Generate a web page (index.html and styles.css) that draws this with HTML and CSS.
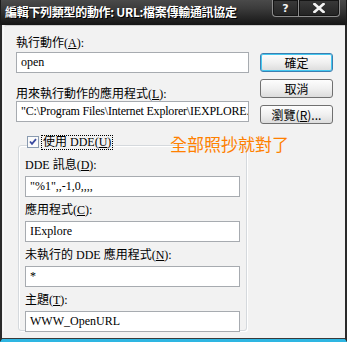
FILE: index.html
```html
<!DOCTYPE html>
<html>
<head>
<meta charset="utf-8">
<link rel="stylesheet" href="styles.css">
</head>
<body>
<div class="window">
  <div class="titlebar">
    <div class="title">編輯下列類型的動作: URL:檔案傳輸通訊協定</div>
    <div class="caption-btns">
      <div class="cap-btn help">?</div>
      <div class="cap-btn close">
        <svg width="12" height="10" viewBox="0 0 12 10"><path d="M1.5 1 L10.5 9 M10.5 1 L1.5 9" stroke="#f4f4f4" stroke-width="2.6" stroke-linecap="square"/></svg>
      </div>
    </div>
  </div>
  <div class="frame">
    <div class="client">
      <div class="col-left">
        <div class="label">執行動作(<u>A</u>):</div>
        <div class="field first">open</div>
        <div class="label gap-lg">用來執行動作的應用程式(<u>L</u>):</div>
        <div class="field path">"C:\Program Files\Internet Explorer\IEXPLORE.EXE" -nohome</div>
        <div class="group">
          <div class="legend">
            <svg class="check" width="12" height="12" viewBox="0 0 12 12">
              <rect x="0.5" y="0.5" width="11" height="11" fill="#fbfbfb" stroke="#8a9bb0"/>
              <path d="M3 5.5 L5 7.8 L9 3.2" fill="none" stroke="#3a4aa0" stroke-width="1.8"/>
            </svg>
            <span class="focus">使用 DDE(<u>U</u>)</span>
          </div>
          <div class="label g-first">DDE 訊息(<u>D</u>):</div>
          <div class="field g">"%1",,-1,0,,,,</div>
          <div class="label g-next">應用程式(<u>C</u>):</div>
          <div class="field g">IExplore</div>
          <div class="label g-next">未執行的 DDE 應用程式(<u>N</u>):</div>
          <div class="field g">*</div>
          <div class="label g-next">主題(<u>T</u>):</div>
          <div class="field g">WWW_OpenURL</div>
        </div>
      </div>
      <div class="col-right">
        <div class="btn default">確定</div>
        <div class="btn">取消</div>
        <div class="btn">瀏覽(<u>R</u>)...</div>
      </div>
    </div>
    <div class="note">全部照抄就對了</div>
  </div>
</div>
</body>
</html>
```
FILE: styles.css
```css
* { box-sizing: border-box; }
html, body { margin: 0; padding: 0; background: #f2f2f2; }
body {
  font-family: "Liberation Serif", "Noto Sans CJK TC", serif;
  font-size: 12px;
  color: #000;
}
.window {
  width: 347px;
  height: 342px;
  display: flex;
  flex-direction: column;
  background: #f2f2f2;
}
.titlebar {
  height: 25px;
  flex: none;
  display: flex;
  align-items: flex-start;
  background: linear-gradient(to bottom, #4a4a4a 0%, #3b3b3b 35%, #2c2c2c 60%, #161616 100%);
  border-left: 1px solid #1a1a1a;
  border-right: 1px solid #1a1a1a;
}
.title {
  padding: 4px 0 0 4px;
  color: #fff;
  font-family: "Noto Sans CJK TC", sans-serif;
  font-weight: bold;
  font-size: 12px;
  line-height: 16px;
  letter-spacing: -0.3px;
  text-shadow: 1px 1px 0 #000;
  white-space: nowrap;
}
.caption-btns {
  margin-left: auto;
  margin-right: 6px;
  display: flex;
}
.cap-btn {
  height: 17px;
  display: flex;
  align-items: center;
  justify-content: center;
  color: #f4f4f4;
  font-family: "DejaVu Sans", sans-serif;
  font-weight: bold;
  font-size: 11px;
  background: linear-gradient(to bottom, #3a3a3a, #232323);
  border: 1px solid #8c8c8c;
  border-top: none;
  box-shadow: inset 0 0 0 1px #151515;
}
.help { width: 26px; border-radius: 0 0 0 4px; border-right: none; }
.close { width: 42px; border-radius: 0 0 4px 0; }
.frame {
  flex: 1;
  position: relative;
  border-left: 2px solid #2a2a2a;
  border-right: 2px solid #2a2a2a;
  border-bottom: 3px solid #2eb6e2;
  box-shadow: inset 0 -1px 0 #3a3a3a;
}
.client {
  display: grid;
  grid-template-columns: 233px 73px;
  column-gap: 11px;
  padding: 10px 0 0 12px;
  border-top: 1px solid #cfcfcf;
  border-left: 1px solid #fafafa;
  border-top-left-radius: 4px;
  margin-left: 1px;
}
.col-left { display: flex; flex-direction: column; }
.label {
  line-height: 14px;
  height: 14px;
  white-space: nowrap;
}
.label u, .btn u, .focus u { text-underline-offset: 1px; }
.gap-lg { margin-top: 14px; }
.field {
  height: 21px;
  background: #fff;
  border: 1px solid #a7abb0;
  padding: 0 0 0 4px;
  line-height: 19px;
  white-space: nowrap;
  overflow: hidden;
}
.field.path { letter-spacing: -0.2px; }
.field.first { margin-top: 2px; }
.group {
  margin: 23px 2px 0 2px;
  border: 1px solid #d5d9dd;
  box-shadow: inset 1px 1px 0 #fff, 1px 1px 0 #fff;
  border-radius: 3px;
  padding: 0 6px 2px 6px;
  height: 186px;
}
.legend {
  display: flex;
  align-items: center;
  gap: 3px;
  margin: -11px 0 0 2px;
  width: fit-content;
  background: #f2f2f2;
  padding-right: 3px;
  height: 14px;
}
.check { flex: none; }
.focus {
  outline: 1px dotted #000;
  outline-offset: 0;
  line-height: 13px;
  padding: 0 1px;
  white-space: nowrap;
}
.g-first { margin-top: 9px; }
.field.g { margin-top: 4px; }
.g-next { margin-top: 6px; }
.col-right {
  padding-top: 17px;
  display: flex;
  flex-direction: column;
  gap: 7px;
}
.btn {
  height: 19px;
  border: 1px solid #707070;
  border-radius: 3px;
  background: linear-gradient(to bottom, #fdfdfd 0%, #f0f0f0 50%, #dcdcdc 100%);
  display: flex;
  align-items: center;
  justify-content: center;
  font-family: "Noto Sans CJK TC", "Liberation Serif", sans-serif;
  line-height: 14px;
  white-space: nowrap;
}
.btn.default {
  border-color: #3c7fb1;
  box-shadow: inset 0 0 0 1px #45c8f0;
}
.note {
  position: absolute;
  left: 168px;
  top: 109px;
  color: #ff8000;
  font-family: "Noto Sans CJK TC", sans-serif;
  font-size: 17px;
  line-height: 20px;
  white-space: nowrap;
}
```
